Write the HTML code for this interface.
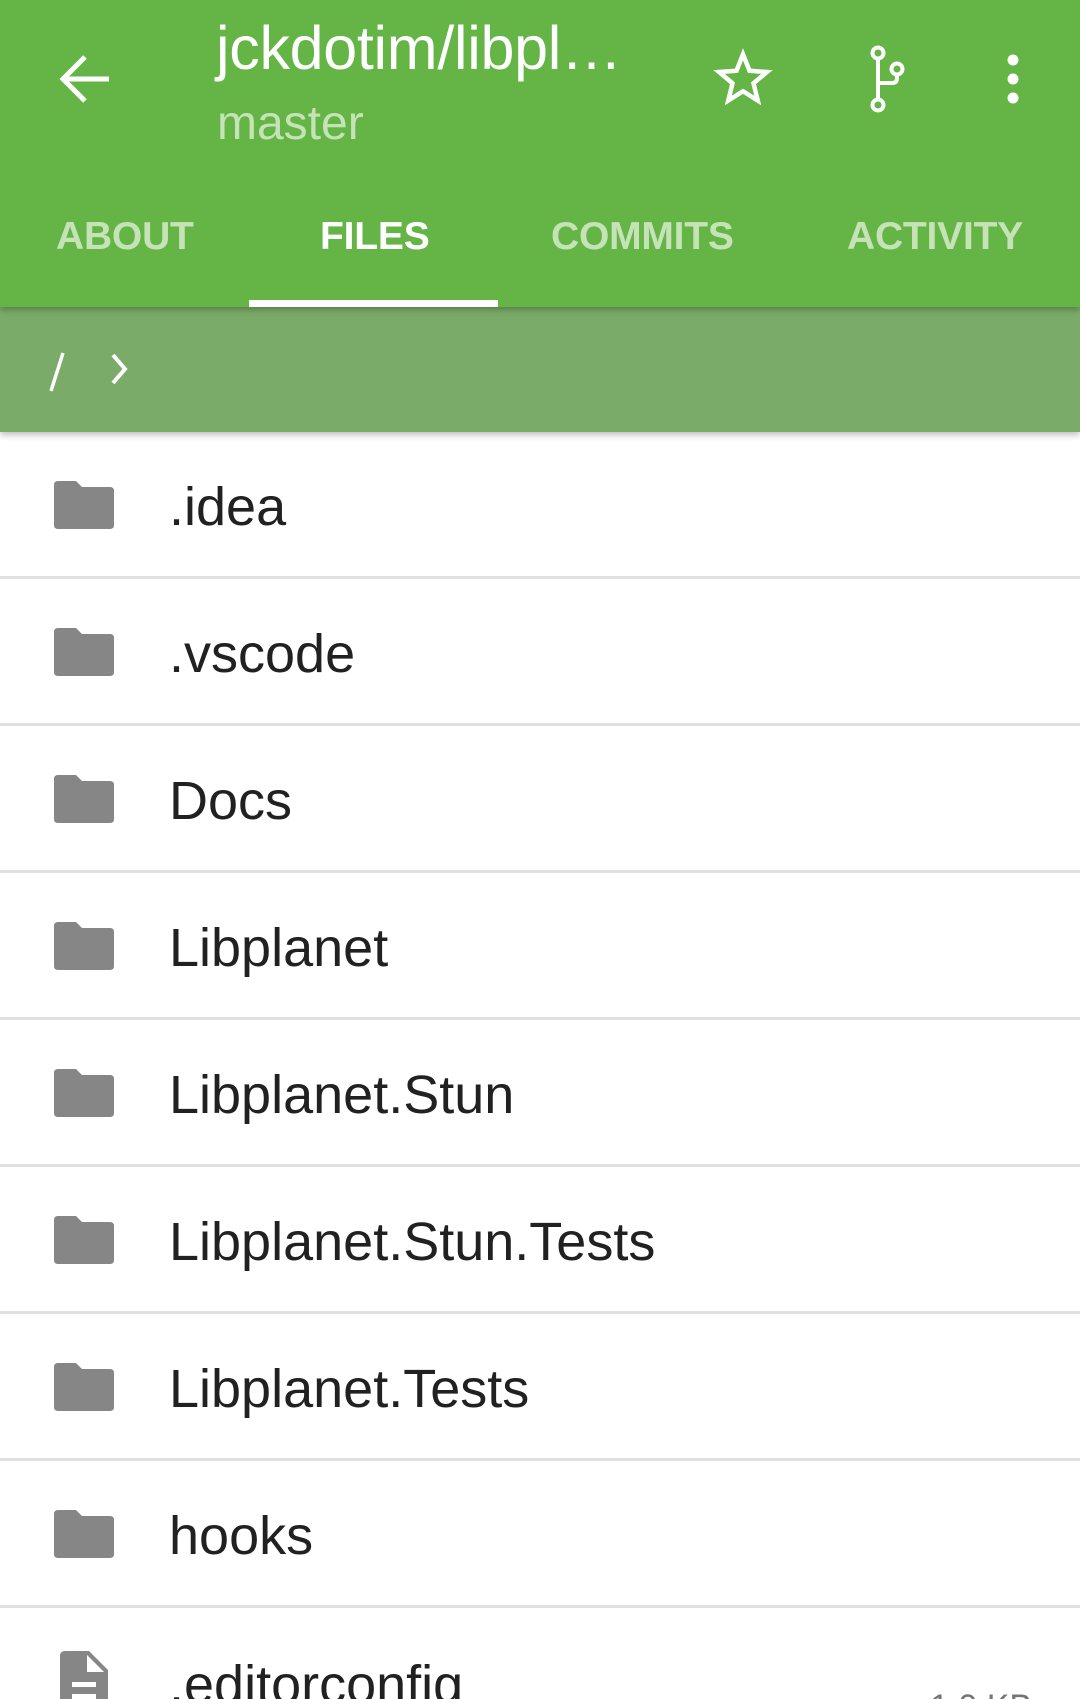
<!DOCTYPE html>
<html><head><meta charset="utf-8">
<style>
*{margin:0;padding:0;box-sizing:border-box}
html,body{width:1080px;height:1699px;overflow:hidden;background:#fff;font-family:"Liberation Sans",Roboto,sans-serif;position:relative}
.hdr{position:absolute;left:0;top:0;width:1080px;height:307px;background:#64b446;z-index:2;box-shadow:0 3px 6px rgba(0,0,0,.25)}
.title{position:absolute;left:216px;top:13px;font-size:61px;color:#fff;letter-spacing:-0.3px;white-space:nowrap}
.sub{position:absolute;left:217px;top:96px;font-size:48px;color:#c5e3b6;white-space:nowrap}
.tab{position:absolute;top:215px;font-size:39px;color:#c5e3b6;white-space:nowrap;font-weight:bold;letter-spacing:-0.2px}
.ind{position:absolute;left:249px;top:300px;width:249px;height:7px;background:#fff}
.bc{position:absolute;left:0;top:307px;width:1080px;height:125px;background:#7aab68;box-shadow:0 3px 6px rgba(0,0,0,.25);z-index:1}
.row{position:absolute;left:0;width:1080px;height:147px;border-bottom:3px solid #e0e0e0}
.row .t{position:absolute;left:169px;top:44px;font-size:54px;color:#212121;white-space:nowrap}
.row svg{position:absolute;left:54px;top:49px}
</style></head><body>
<div class="hdr">
<svg style="position:absolute;left:58px;top:52px" width="54" height="54" viewBox="0 0 54 54"><path d="M51 27H8M27 5L5 27L27 49" fill="none" stroke="#fff" stroke-width="5"/></svg>
<div class="title">jckdotim/libpl…</div>
<div class="sub">master</div>
<svg style="position:absolute;left:712px;top:48px" width="62" height="60" viewBox="0 0 24 24"><path d="M12 2.5l2.6 6.6 7 .5-5.4 4.5 1.7 6.9L12 17.3 6.1 21l1.7-6.9L2.4 9.6l7-.5z" fill="none" stroke="#fff" stroke-width="1.8" stroke-linejoin="miter"/></svg>
<svg style="position:absolute;left:860px;top:40px" width="50" height="80" viewBox="0 0 50 80"><g fill="none" stroke="#fff" stroke-width="4"><circle cx="18" cy="13" r="5.5"/><circle cx="37" cy="29" r="5.5"/><circle cx="18" cy="65" r="5.5"/><path d="M18 18.5V59.5M37 34.5V38q0 5-5 5H18"/></g></svg>
<svg style="position:absolute;left:1003px;top:54px" width="20" height="50" viewBox="0 0 20 50"><circle cx="10" cy="6" r="5.5" fill="#fff"/><circle cx="10" cy="25" r="5.5" fill="#fff"/><circle cx="10" cy="44" r="5.5" fill="#fff"/></svg>
<div class="tab" style="left:56px">ABOUT</div>
<div class="tab" style="left:320px;color:#fff">FILES</div>
<div class="tab" style="left:551px">COMMITS</div>
<div class="tab" style="left:847px">ACTIVITY</div>
<div class="ind"></div>
</div>
<div class="bc">
<svg style="position:absolute;left:46px;top:44px" width="22" height="42" viewBox="0 0 22 42"><path d="M17 2L5 40" stroke="#fff" stroke-width="3.5"/></svg>
<svg style="position:absolute;left:108px;top:46px" width="24" height="32" viewBox="0 0 24 32"><path d="M5 2l12 14L5 30" fill="none" stroke="#fff" stroke-width="4"/></svg>
</div>

<div class="row" style="top:432px"><svg width="60" height="48" viewBox="0 0 60 48"><path d="M4 0h18l6 6h28q4 0 4 4v34q0 4-4 4H4q-4 0-4-4V4q0-4 4-4z" fill="#868686"/></svg><div class="t">.idea</div></div>
<div class="row" style="top:579px"><svg width="60" height="48" viewBox="0 0 60 48"><path d="M4 0h18l6 6h28q4 0 4 4v34q0 4-4 4H4q-4 0-4-4V4q0-4 4-4z" fill="#868686"/></svg><div class="t">.vscode</div></div>
<div class="row" style="top:726px"><svg width="60" height="48" viewBox="0 0 60 48"><path d="M4 0h18l6 6h28q4 0 4 4v34q0 4-4 4H4q-4 0-4-4V4q0-4 4-4z" fill="#868686"/></svg><div class="t">Docs</div></div>
<div class="row" style="top:873px"><svg width="60" height="48" viewBox="0 0 60 48"><path d="M4 0h18l6 6h28q4 0 4 4v34q0 4-4 4H4q-4 0-4-4V4q0-4 4-4z" fill="#868686"/></svg><div class="t">Libplanet</div></div>
<div class="row" style="top:1020px"><svg width="60" height="48" viewBox="0 0 60 48"><path d="M4 0h18l6 6h28q4 0 4 4v34q0 4-4 4H4q-4 0-4-4V4q0-4 4-4z" fill="#868686"/></svg><div class="t">Libplanet.Stun</div></div>
<div class="row" style="top:1167px"><svg width="60" height="48" viewBox="0 0 60 48"><path d="M4 0h18l6 6h28q4 0 4 4v34q0 4-4 4H4q-4 0-4-4V4q0-4 4-4z" fill="#868686"/></svg><div class="t">Libplanet.Stun.Tests</div></div>
<div class="row" style="top:1314px"><svg width="60" height="48" viewBox="0 0 60 48"><path d="M4 0h18l6 6h28q4 0 4 4v34q0 4-4 4H4q-4 0-4-4V4q0-4 4-4z" fill="#868686"/></svg><div class="t">Libplanet.Tests</div></div>
<div class="row" style="top:1461px"><svg width="60" height="48" viewBox="0 0 60 48"><path d="M4 0h18l6 6h28q4 0 4 4v34q0 4-4 4H4q-4 0-4-4V4q0-4 4-4z" fill="#868686"/></svg><div class="t">hooks</div></div>
<div class="row" style="top:1608px;height:91px;border:none;overflow:hidden">
<svg style="left:60px;top:43px" width="48" height="60" viewBox="0 0 48 60"><path d="M5 0h24l19 19v41H0V5q0-5 5-5z" fill="#868686"/><path d="M27 4v17h17z" fill="#fff"/><rect x="12" y="31" width="24" height="5" fill="#fff"/><rect x="12" y="43" width="24" height="5" fill="#fff"/></svg>
<div class="t" style="top:46px">.editorconfig</div>
<div style="position:absolute;left:930px;top:80px;font-size:34px;color:#757575">1.0 KB</div>
</div>
</body></html>
